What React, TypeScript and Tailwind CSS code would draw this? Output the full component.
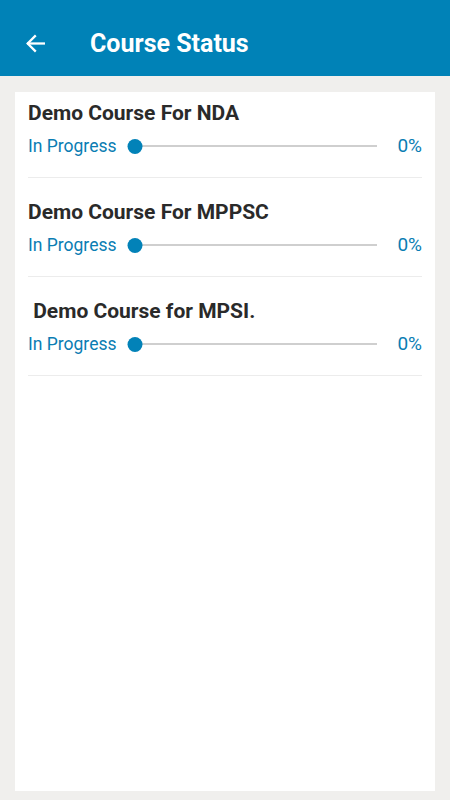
import React from 'react';

const courses = [
  { title: 'Demo Course For NDA', pct: 0 },
  { title: 'Demo Course For MPPSC', pct: 0 },
  { title: '\u00a0Demo Course for MPSI.', pct: 0 },
];

export default function App() {
  return (
    <div className="w-[450px] h-[800px] bg-[#f0efed] flex flex-col" style={{ fontFamily: 'Roboto, "Noto Sans", sans-serif' }}>
      {/* Toolbar */}
      <div className="h-[76px] bg-[#0082b7] flex items-center pt-[10px] shrink-0">
        <div className="w-[90px] pl-[23px] flex items-center">
          <svg width="25" height="25" viewBox="0 0 24 24" fill="none" stroke="white" strokeWidth="2.2" strokeLinecap="square">
            <path d="M20 12H5" />
            <path d="M11.5 5L4.5 12l7 7" />
          </svg>
        </div>
        <h1 className="text-white text-[25px] font-bold leading-none">Course Status</h1>
      </div>

      {/* Card */}
      <div className="flex-1 mx-[15px] mt-[16px] mb-[9px] bg-white px-[13px]">
        {courses.map((c, i) => (
          <div key={c.title} className={`border-b border-[#ececec] pb-[20px] ${i === 0 ? 'pt-[9px]' : 'pt-[22px]'}`}>
            <div className="text-[21px] font-bold text-[#2a2a2a] leading-[24px] whitespace-pre">{c.title}</div>
            <div className="flex items-center mt-[10px] h-[22px]">
              <span className="text-[17.5px] text-[#0a7db3] w-[100px] shrink-0">In Progress</span>
              <div className="relative flex-1 h-[22px] flex items-center mr-[20px] ml-[7px]">
                <div className="h-[2px] w-full bg-[#cfcfcf]" />
                <div
                  className="absolute w-[15px] h-[15px] rounded-full bg-[#0282b8] -translate-x-1/2"
                  style={{ left: `${c.pct}%` }}
                />
              </div>
              <span className="text-[19px] text-[#0a7db3] w-[25px] text-right whitespace-nowrap">{c.pct}%</span>
            </div>
          </div>
        ))}
      </div>
    </div>
  );
}
